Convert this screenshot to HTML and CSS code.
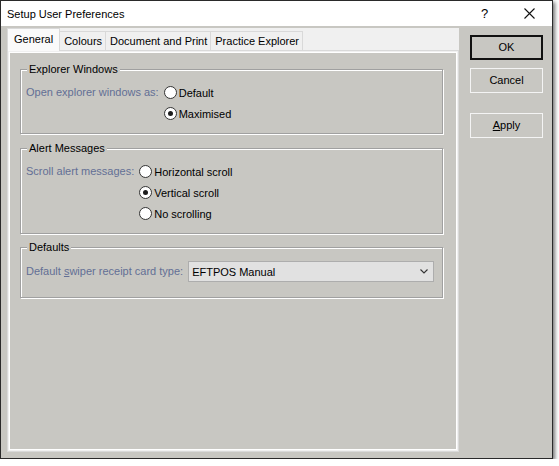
FILE: index.html
```html
<!DOCTYPE html>
<html lang="en">
    <head>
        <meta charset="UTF-8">
        <meta name="viewport" content="width=device-width, initial-scale=1.0">
        <title>Setup User Preferences</title>
        <link rel="stylesheet" href="styles.css">
    </head>

    <body>
        <div class="window">
            <div class="titlebar">
                <span class="title">Setup User Preferences</span>
                <span class="title-btn help">?</span>
                <span class="title-btn">
                    <svg width="11" height="11" viewBox="0 0 11 11">
                        <path d="M0.5 0.5 L10.5 10.5 M10.5 0.5 L0.5 10.5" stroke="#111" stroke-width="1.1" fill="none"/>
                    </svg>
                </span>
            </div>

            <div class="content">
                <div class="tabs">
                    <div class="tab-strip">
                        <div class="tab active">General</div>
                        <div class="tab">Colours</div>
                        <div class="tab">Document and Print</div>
                        <div class="tab">Practice Explorer</div>
                    </div>

                    <div class="page">
                        <fieldset class="group">
                            <legend>Explorer Windows</legend>
                            <div class="field">
                                <span class="prompt">Open explorer windows as:</span>
                                <div class="options">
                                    <div class="radio"><span class="radio-dot"></span>Default</div>
                                    <div class="radio checked"><span class="radio-dot"></span>Maximised</div>
                                </div>
                            </div>
                        </fieldset>

                        <fieldset class="group">
                            <legend>Alert Messages</legend>
                            <div class="field">
                                <span class="prompt">Scroll alert messages:</span>
                                <div class="options">
                                    <div class="radio"><span class="radio-dot"></span>Horizontal scroll</div>
                                    <div class="radio checked"><span class="radio-dot"></span>Vertical scroll</div>
                                    <div class="radio"><span class="radio-dot"></span>No scrolling</div>
                                </div>
                            </div>
                        </fieldset>

                        <fieldset class="group defaults">
                            <legend>Defaults</legend>
                            <div class="field">
                                <span class="prompt">Default <u>s</u>wiper receipt card type:</span>
                                <div class="select">
                                    <span>EFTPOS Manual</span>
                                    <svg width="8" height="5" viewBox="0 0 8 5">
                                        <path d="M0.5 0.5 L4 4 L7.5 0.5" stroke="#333" stroke-width="1.1" fill="none"/>
                                    </svg>
                                </div>
                            </div>
                        </fieldset>
                    </div>
                </div>

                <div class="buttons">
                    <div class="btn default">OK</div>
                    <div class="btn cancel">Cancel</div>
                    <div class="btn apply"><u>A</u>pply</div>
                </div>
            </div>
        </div>
    </body>
</html>
```

FILE: styles.css
```css
body {
    margin: 0;
    background: #fff;
    font-family: "Liberation Sans", Arial, sans-serif;
    font-size: 11px;
    color: #000;
}

.window {
    width: 551px;
    height: 457px;
    border: 1px solid #2a2a2a;
    background: #c8c7c2;
    box-shadow: 2px 2px 4px rgba(0, 0, 0, 0.55);
    display: flex;
    flex-direction: column;
}

.titlebar {
    height: 25px;
    background: #fff;
    display: flex;
    align-items: center;
}

.title {
    flex: 1;
    padding-left: 6px;
    font-size: 11px;
}

.title-btn {
    width: 45px;
    height: 25px;
    display: flex;
    align-items: center;
    justify-content: center;
}

.help {
    font-size: 13px;
}

.content {
    flex: 1;
    display: flex;
    padding: 2px 0 0 6px;
}

.tabs {
    width: 452px;
    height: 424px;
    display: flex;
    flex-direction: column;
    background: #f0f0f0;
}

.tab-strip {
    display: flex;
    align-items: flex-end;
    height: 22px;
}

.tab {
    height: 19px;
    line-height: 18px;
    padding: 0 3px 0 4px;
    box-sizing: border-box;
    border: 1px solid #d9d9d9;
    border-bottom: none;
    margin-left: -1px;
    background: #f0f0f0;
}

.tab:first-child {
    margin-left: 0;
}

.tab.active {
    height: 23px;
    line-height: 20px;
    padding: 0 6px;
    margin-bottom: -1px;
    background: #fafafa;
    position: relative;
    z-index: 1;
}

.page {
    flex: 1;
    border: 1px solid #d9d9d9;
    box-shadow: inset 0 0 0 1px #f0f0f0, inset 0 0 0 2px #fff;
    background: #c8c7c2;
    padding: 11px 15px 0 12px;
}

.group {
    margin: 7px 0 0 0;
    padding: 6px 7px 9px 5px;
    border: 1px solid #a0a0a0;
    box-shadow: inset 1px 1px 0 #fff, 1px 1px 0 #fff;
    min-width: 0;
}

.group:first-child {
    margin-top: 0;
}

.group legend {
    padding: 0 2px;
    margin-left: 1px;
    line-height: 14px;
    background: #c8c7c2;
}

.group.defaults {
    margin-top: 6px;
    padding-top: 7px;
    padding-bottom: 15px;
}

.field {
    display: grid;
    grid-template-columns: auto auto;
    justify-content: start;
    column-gap: 5px;
    align-items: start;
}

.prompt {
    color: #636f95;
    line-height: 21px;
}

.options {
    display: flex;
    flex-direction: column;
}

.radio {
    height: 21px;
    display: flex;
    align-items: center;
    gap: 2px;
}

.radio-dot {
    width: 13px;
    height: 13px;
    box-sizing: border-box;
    border: 1px solid #333;
    border-radius: 50%;
    background: #fff;
    display: flex;
    align-items: center;
    justify-content: center;
}

.radio.checked .radio-dot::after {
    content: "";
    width: 5px;
    height: 5px;
    border-radius: 50%;
    background: #1c1c1c;
}

.select {
    width: 246px;
    height: 21px;
    box-sizing: border-box;
    border: 1px solid #adadad;
    background: #e1e1e1;
    display: flex;
    align-items: center;
    justify-content: space-between;
    padding: 0 5px 0 3px;
}

.buttons {
    display: flex;
    flex-direction: column;
    width: 73px;
    margin: 7px 0 0 11px;
}

.btn {
    height: 25px;
    box-sizing: border-box;
    border: 1px solid #f4f4f4;
    text-align: center;
    line-height: 23px;
}

.btn.default {
    border: 2px solid #111;
    line-height: 21px;
}

.btn.cancel {
    margin-top: 8px;
}

.btn.apply {
    margin-top: 20px;
}
```
